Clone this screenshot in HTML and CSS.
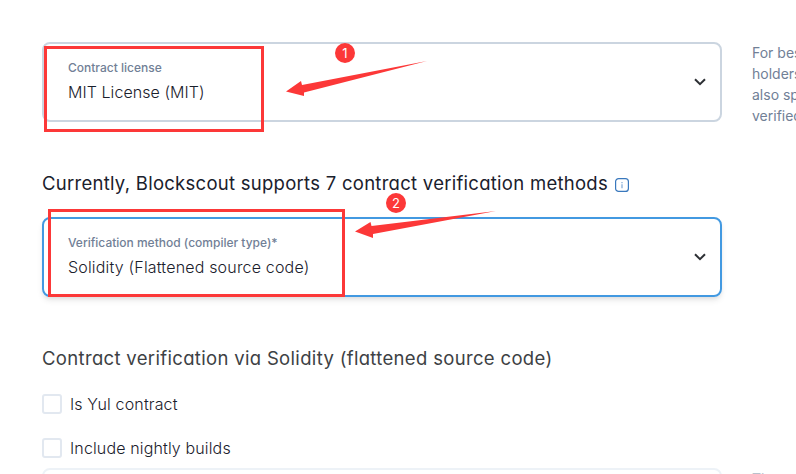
FILE: index.html
```html
<!DOCTYPE html>
<html lang="en">
<head>
<meta charset="utf-8">
<title>Contract verification</title>
<link rel="stylesheet" href="styles.css">
</head>
<body>
<main class="page">
  <section class="row">
    <div class="select">
      <div class="field">
        <span class="label">Contract license</span>
        <span class="value license">MIT License (MIT)</span>
      </div>
      <svg class="chevron" viewBox="0 0 14 10"><path d="M2 2.2 7 7.2 12 2.2"/></svg>
    </div>
    <p class="hint">For best<br>holders<br>also spe<br>verified</p>
  </section>
  <h2 class="heading"><span class="methods">Currently, Blockscout supports 7 contract verification methods</span>
    <svg class="info" viewBox="0 0 14 14"><rect x=".6" y=".6" width="12.8" height="12.8" rx="3"/><path class="dot" d="M7 4v1.200M7 6.200v4"/></svg>
  </h2>
  <div class="select active">
    <div class="field">
      <span class="label">Verification method (compiler type)*</span>
      <span class="value">Solidity (Flattened source code)</span>
    </div>
    <svg class="chevron" viewBox="0 0 14 10"><path d="M2 2.2 7 7.2 12 2.2"/></svg>
  </div>
  <h2 class="heading via"><span class="method-name">Contract verification via Solidity (flattened source code)</span></h2>
  <div class="check"><span class="box"></span><span class="yul">Is Yul contract</span></div>
  <div class="check"><span class="box"></span><span class="nightly">Include nightly builds</span></div>
  <section class="row next">
    <div class="select pale"></div>
    <p class="hint low">The</p>
  </section>
</main>
<svg class="annotations" viewBox="0 0 796 474">
  <rect class="frame" x="45.5" y="47.5" width="217" height="83"/>
  <rect class="frame" x="49.5" y="210.5" width="294" height="85"/>
  <path d="M286 91.500 301 81 302 85 427 61 304 92.500 304 96Z"/>
  <path d="M355 231.500 370.500 222 371.500 226 496 211 373 234 373 238Z"/>
  <circle cx="345" cy="53" r="10"/>
  <circle cx="396" cy="203" r="10"/>
  <text x="345" y="57.500">1</text>
  <text x="396" y="207.500">2</text>
</svg>
</body>
</html>
```
FILE: styles.css
```css
* { box-sizing: border-box; }
body {
  margin: 0;
  height: 474px;
  overflow: hidden;
  background: #fff;
  font-family: Inter, "Liberation Sans", sans-serif;
  color: #1a202c;
}
.page { height: 474px; padding: 42px 0 0 42px; overflow: hidden; }
.row { display: grid; grid-template-columns: 680px 1fr; grid-template-rows: 80px; column-gap: 30px; }
.select {
  display: flex;
  align-items: center;
  justify-content: space-between;
  width: 680px;
  height: 80px;
  padding: 0 13px 0 24px;
  border: 2px solid #cbd5e0;
  border-radius: 8px;
}
.active { border-color: #4299e1; box-shadow: 0 4px 6px -1px rgba(0,0,0,.1), 0 2px 4px -1px rgba(0,0,0,.06); }
.pale { border-color: #edf2f7; }
.field { display: flex; flex-direction: column; }
.label { font-size: 12px; line-height: 20px; font-weight: 500; color: #718096; }
.value { font-size: 16px; line-height: 24px; font-weight: 350; letter-spacing: .18px; margin-top: 2px; margin-bottom: 2px; }
.license { letter-spacing: .06px; }
.chevron { width: 14px; height: 10px; fill: none; stroke: #2d3034; stroke-width: 2; }
.hint { margin: 0; font-size: 14px; line-height: 21px; color: #718096; white-space: nowrap; }
.heading {
  display: flex;
  align-items: center;
  gap: 7px;
  height: 28px;
  margin: 48px 0 19px;
  font-size: 18.5px;
  line-height: 27px;
  font-weight: 400;
  font-feature-settings: "cv11";
  letter-spacing: .27px;
  white-space: nowrap;
}
.methods, .method-name { margin-bottom: 1px; }
.via { margin: 48px 0 21px; color: #3d4144; letter-spacing: .33px; }
.info { position: relative; top: 1px; width: 14px; height: 14px; fill: none; stroke: #3978bd; stroke-width: 1.200; }
.dot { stroke: #7fa8d6; }
.check { display: flex; align-items: center; gap: 8px; height: 20px; margin-bottom: 24px; font-size: 16px; font-weight: 350; letter-spacing: .14px; }
.box { width: 20px; height: 20px; border: 2px solid #e2e8f0; border-radius: 3px; }
.next { margin-top: -14px; }
.low { margin-top: 0; color: #b9c1cc; }
.annotations { position: absolute; inset: 0; width: 796px; height: 474px; fill: #fc3838; }
.frame { fill: none; stroke: #fc3838; stroke-width: 3; }
.annotations text { fill: #fff; font-size: 13px; text-anchor: middle; }
```
